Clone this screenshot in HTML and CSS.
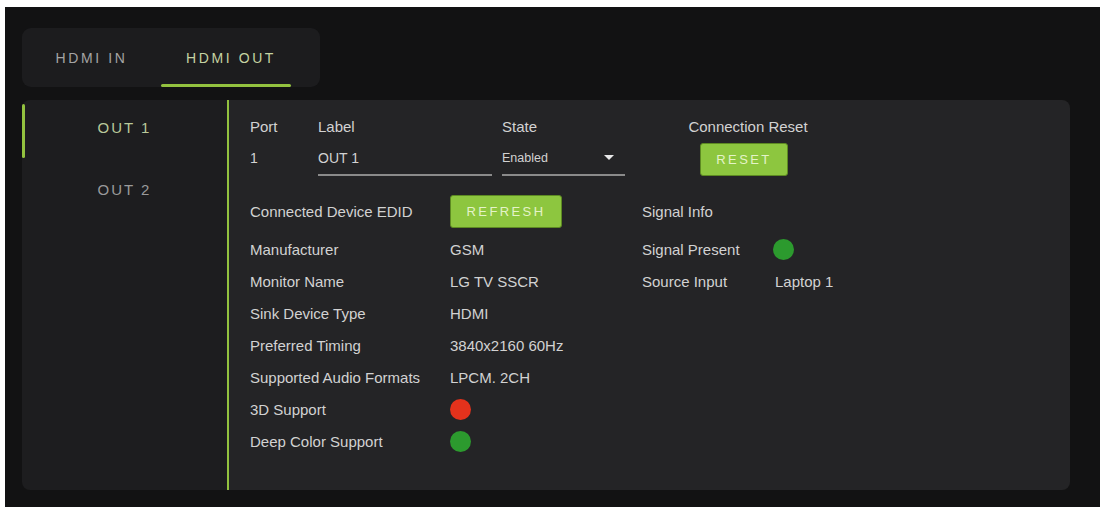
FILE: index.html
```html
<!DOCTYPE html>
<html lang="en">
<head>
  <meta charset="UTF-8" />
  <title>HDMI Output Settings</title>
  <meta name="viewport" content="width=device-width, initial-scale=1" />
  <link rel="stylesheet" href="styles.css">
</head>
<body>
  <div class="screen">

    <!-- tabs -->
    <div class="tabs">
      <div class="tab tab-in">HDMI IN</div>
      <div class="tab tab-out active">HDMI OUT</div>
    </div>

    <div class="panel">
      <!-- output list -->
      <div class="nav">
        <div class="nav-item active">OUT 1</div>
        <div class="nav-item">OUT 2</div>
      </div>

      <div class="content">
        <div class="top-row">
          <div class="field f-port">
            <div class="head">Port</div>
            <div class="value plain">1</div>
          </div>
          <div class="field f-label">
            <div class="head">Label</div>
            <div class="value line">OUT 1</div>
          </div>
          <div class="field f-state">
            <div class="head">State</div>
            <div class="value line select">Enabled <span class="caret"></span></div>
          </div>
          <div class="field f-reset">
            <div class="head">Connection Reset</div>
            <button class="btn btn-reset">RESET</button>
          </div>
        </div>

        <div class="info">
          <div class="block edid">
            <div class="row head-row">
              <span class="key">Connected Device EDID</span>
              <button class="btn btn-refresh">REFRESH</button>
            </div>
            <div class="row"><span class="key">Manufacturer</span><span>GSM</span></div>
            <div class="row"><span class="key">Monitor Name</span><span>LG TV SSCR</span></div>
            <div class="row"><span class="key">Sink Device Type</span><span>HDMI</span></div>
            <div class="row"><span class="key">Preferred Timing</span><span>3840x2160 60Hz</span></div>
            <div class="row"><span class="key">Supported Audio Formats</span><span>LPCM. 2CH</span></div>
            <div class="row"><span class="key">3D Support</span><span class="dot red"></span></div>
            <div class="row"><span class="key">Deep Color Support</span><span class="dot green"></span></div>
          </div>

          <div class="block signal">
            <div class="row head-row"><span class="key">Signal Info</span></div>
            <div class="row"><span class="key">Signal Present</span><span class="dot green"></span></div>
            <div class="row"><span class="key">Source Input</span><span>Laptop 1</span></div>
          </div>
        </div>
      </div>
    </div>

  </div>
</body>
</html>
```

FILE: styles.css
```css
* {
  margin: 0; padding: 0; box-sizing: border-box;
}

html, body {
  background: #fff;
  font-family: "Liberation Sans", Arial, sans-serif;
  color: #d2d2d2;
}

.screen {
  margin: 7px 4px 0 5px;
  height: 500px;
  background: #121213;
  padding: 21px 30px 0 17px;
}

/* tabs */
.tabs {
  display: flex;
  width: 298px;
  height: 59px;
  background: #1c1c1e;
  border-radius: 9px;
}

.tab {
  position: relative;
  display: flex;
  align-items: center;
  justify-content: center;
  font-size: 14px;
  letter-spacing: 2.6px;
  color: #a4a4a4;
}

.tab-in { width: 139px; padding-top: 1px; }
.tab-out { width: 130px; padding-left: 10px; padding-top: 1px; }

.tab.active {
  color: #c5d3a2;
}

.tab.active::after {
  content: "";
  position: absolute;
  left: 0; right: 0;
  bottom: 0;
  height: 3px;
  border-radius: 2px;
  background: #93c23f;
}

/* main panel */
.panel {
  display: flex;
  margin-top: 13px;
  height: 390px;
}

.nav {
  width: 207px;
  background: #1d1d1f;
  border-radius: 8px 0 0 8px;
  border-right: 2px solid #93c23f;
  display: flex;
  flex-direction: column;
  gap: 4px;
}

.nav-item {
  position: relative;
  height: 58px;
  display: flex;
  align-items: center;
  justify-content: center;
  font-size: 15px;
  letter-spacing: 2px;
  color: #9a9a9a;
  padding-bottom: 3px;
}

.nav-item.active {
  color: #b9c99a;
}

.nav-item.active::before {
  content: "";
  position: absolute;
  left: 0;
  top: 4px;
  bottom: 0;
  width: 3px;
  border-radius: 2px;
  background: #93c23f;
}

.content {
  flex: 1;
  background: #242426;
  border-radius: 0 8px 8px 0;
  padding: 19px 0 0 21px;
  font-size: 15px;
}

/* port / label / state / reset */
.top-row {
  display: flex;
  align-items: flex-start;
}

.head {
  line-height: 16px;
  height: 16px;
}

.value {
  margin-top: 6px;
  padding: 9px 0 8px;
  line-height: 16px;
  font-size: 14px;
}

.value.line {
  border-bottom: 2px solid #8a8a8a;
}

.f-port { width: 68px; }
.f-label { width: 184px; }
.f-label .value { width: 174px; }
.f-state { width: 123px; }

.select {
  display: flex;
  align-items: center;
  justify-content: space-between;
  font-size: 12.5px;
  padding-right: 11px;
}

.caret {
  width: 0; height: 0;
  border-left: 5px solid transparent;
  border-right: 5px solid transparent;
  border-top: 5px solid #e8e8e8;
  margin-top: -2px;
}

.f-reset {
  margin-left: 62px;
  width: 122px;
  display: flex;
  flex-direction: column;
  align-items: center;
}

.btn {
  height: 33px;
  border: 1px solid #5d8a22;
  border-radius: 3px;
  background: #8dc63f;
  color: #e4f3c8;
  font-family: inherit;
  font-size: 13px;
  letter-spacing: 2.4px;
}

.btn-reset {
  width: 88px;
  margin-top: 8px;
  margin-right: 8px;
}

.btn-refresh {
  width: 112px;
}

/* device info */
.info {
  display: flex;
  margin-top: 19px;
}

.block {
  display: flex;
  flex-direction: column;
}

.edid { width: 392px; }

.row {
  display: flex;
  align-items: center;
  height: 32px;
}

.row.head-row {
  height: 33px;
  margin-bottom: 5px;
}

.edid .key { width: 200px; }
.signal .key { width: 133px; }
.signal .dot { margin-left: -2px; }

.dot {
  width: 21px;
  height: 21px;
  border-radius: 50%;
}

.dot.green { background: #2c9a2e; }
.dot.red { background: #e4321c; }
```
